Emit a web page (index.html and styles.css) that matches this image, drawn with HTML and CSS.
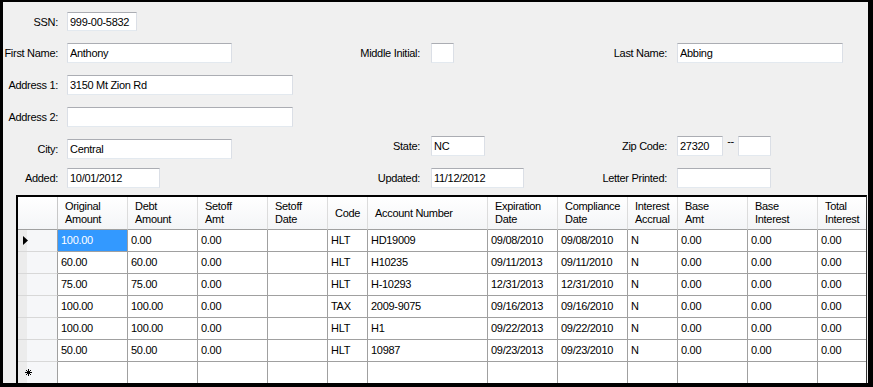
FILE: index.html
```html
<!DOCTYPE html>
<html lang="en">
<head>
    <meta charset="UTF-8">
    <title>Debtor Detail</title>
    <link rel="stylesheet" href="styles.css">
</head>
<body>
    <div class="window">
        <div class="form">
            <label class="lbl c1" for="ssn">SSN:</label>
            <input class="field c2 w-ssn" id="ssn" type="text" value="999-00-5832" readonly>

            <label class="lbl c1" for="first">First Name:</label>
            <input class="field c2 w-name" id="first" type="text" value="Anthony" readonly>
            <label class="lbl c3" for="mi">Middle Initial:</label>
            <input class="field c4 w-mi" id="mi" type="text" value="" readonly>
            <label class="lbl c5" for="last">Last Name:</label>
            <input class="field c6 w-last" id="last" type="text" value="Abbing" readonly>

            <label class="lbl c1" for="addr1">Address 1:</label>
            <input class="field c2 w-addr" id="addr1" type="text" value="3150 Mt Zion Rd" readonly>

            <label class="lbl c1" for="addr2">Address 2:</label>
            <input class="field c2 w-addr" id="addr2" type="text" value="" readonly>

            <label class="lbl c1" for="city">City:</label>
            <input class="field c2 w-name" id="city" type="text" value="Central" readonly>
            <label class="lbl c3 up" for="state">State:</label>
            <input class="field c4 w-state up" id="state" type="text" value="NC" readonly>
            <label class="lbl c5 up" for="zip">Zip Code:</label>
            <div class="zip c6 up">
                <input class="field w-zip" id="zip" type="text" value="27320" readonly>
                <span class="dash">--</span>
                <input class="field w-zip4" type="text" value="" readonly>
            </div>

            <label class="lbl c1" for="added">Added:</label>
            <input class="field c2 w-date" id="added" type="text" value="10/01/2012" readonly>
            <label class="lbl c3" for="updated">Updated:</label>
            <input class="field c4 w-date" id="updated" type="text" value="11/12/2012" readonly>
            <label class="lbl c5" for="printed">Letter Printed:</label>
            <input class="field c6 w-printed" id="printed" type="text" value="" readonly>
        </div>

        <div class="grid-view">
            <div class="gv-row gv-head">
                <div class="hcell corner"></div>
                <div class="hcell">Original<br>Amount</div>
                <div class="hcell">Debt<br>Amount</div>
                <div class="hcell">Setoff<br>Amt</div>
                <div class="hcell">Setoff<br>Date</div>
                <div class="hcell">Code</div>
                <div class="hcell">Account Number</div>
                <div class="hcell">Expiration<br>Date</div>
                <div class="hcell">Compliance<br>Date</div>
                <div class="hcell">Interest<br>Accrual</div>
                <div class="hcell">Base<br>Amt</div>
                <div class="hcell">Base<br>Interest</div>
                <div class="hcell">Total<br>Interest</div>
            </div>

            <div class="gv-row">
                <div class="rowhdr">
                    <svg width="5" height="9" viewBox="0 0 5 9"><polygon points="0,0 5,4.5 0,9" fill="#000"/></svg>
                </div>
                <div class="cell selected">100.00</div>
                <div class="cell">0.00</div>
                <div class="cell">0.00</div>
                <div class="cell"></div>
                <div class="cell">HLT</div>
                <div class="cell">HD19009</div>
                <div class="cell">09/08/2010</div>
                <div class="cell">09/08/2010</div>
                <div class="cell">N</div>
                <div class="cell">0.00</div>
                <div class="cell">0.00</div>
                <div class="cell">0.00</div>
            </div>
            <div class="gv-row">
                <div class="rowhdr"></div>
                <div class="cell">60.00</div>
                <div class="cell">60.00</div>
                <div class="cell">0.00</div>
                <div class="cell"></div>
                <div class="cell">HLT</div>
                <div class="cell">H10235</div>
                <div class="cell">09/11/2013</div>
                <div class="cell">09/11/2010</div>
                <div class="cell">N</div>
                <div class="cell">0.00</div>
                <div class="cell">0.00</div>
                <div class="cell">0.00</div>
            </div>
            <div class="gv-row">
                <div class="rowhdr"></div>
                <div class="cell">75.00</div>
                <div class="cell">75.00</div>
                <div class="cell">0.00</div>
                <div class="cell"></div>
                <div class="cell">HLT</div>
                <div class="cell">H-10293</div>
                <div class="cell">12/31/2013</div>
                <div class="cell">12/31/2010</div>
                <div class="cell">N</div>
                <div class="cell">0.00</div>
                <div class="cell">0.00</div>
                <div class="cell">0.00</div>
            </div>
            <div class="gv-row">
                <div class="rowhdr"></div>
                <div class="cell">100.00</div>
                <div class="cell">100.00</div>
                <div class="cell">0.00</div>
                <div class="cell"></div>
                <div class="cell">TAX</div>
                <div class="cell">2009-9075</div>
                <div class="cell">09/16/2013</div>
                <div class="cell">09/16/2010</div>
                <div class="cell">N</div>
                <div class="cell">0.00</div>
                <div class="cell">0.00</div>
                <div class="cell">0.00</div>
            </div>
            <div class="gv-row">
                <div class="rowhdr"></div>
                <div class="cell">100.00</div>
                <div class="cell">100.00</div>
                <div class="cell">0.00</div>
                <div class="cell"></div>
                <div class="cell">HLT</div>
                <div class="cell">H1</div>
                <div class="cell">09/22/2013</div>
                <div class="cell">09/22/2010</div>
                <div class="cell">N</div>
                <div class="cell">0.00</div>
                <div class="cell">0.00</div>
                <div class="cell">0.00</div>
            </div>
            <div class="gv-row">
                <div class="rowhdr"></div>
                <div class="cell">50.00</div>
                <div class="cell">50.00</div>
                <div class="cell">0.00</div>
                <div class="cell"></div>
                <div class="cell">HLT</div>
                <div class="cell">10987</div>
                <div class="cell">09/23/2013</div>
                <div class="cell">09/23/2010</div>
                <div class="cell">N</div>
                <div class="cell">0.00</div>
                <div class="cell">0.00</div>
                <div class="cell">0.00</div>
            </div>
            <div class="gv-row">
                <div class="rowhdr newrow">
                    <svg width="7" height="7" viewBox="0 0 7 7" stroke="#000" stroke-width="1">
                        <line x1="3.5" y1="0" x2="3.5" y2="7"/>
                        <line x1="0" y1="3.5" x2="7" y2="3.5"/>
                        <line x1="1" y1="1" x2="6" y2="6"/>
                        <line x1="6" y1="1" x2="1" y2="6"/>
                    </svg>
                </div>
                <div class="cell"></div>
                <div class="cell"></div>
                <div class="cell"></div>
                <div class="cell"></div>
                <div class="cell"></div>
                <div class="cell"></div>
                <div class="cell"></div>
                <div class="cell"></div>
                <div class="cell"></div>
                <div class="cell"></div>
                <div class="cell"></div>
                <div class="cell"></div>
            </div>
        </div>
    </div>
</body>
</html>
```

FILE: styles.css
```css
body {
    margin: 0;
    font-family: "Liberation Sans", Arial, sans-serif;
    font-size: 11px;
    letter-spacing: -0.3px;
    color: #000;
}
.window {
    width: 873px;
    height: 387px;
    box-sizing: border-box;
    border: solid #000;
    border-width: 2px 5px 4px 3px;
    background: #f0f0f0;
    display: flex;
    flex-direction: column;
    overflow: hidden;
}

/* header fields */
.form {
    display: grid;
    grid-template-columns: 64px 233px 131px 129px 117px 1fr;
    grid-template-rows: 31px 32px 32px 32px 29px 27px;
    padding-top: 10px;
}
.c1 { grid-column: 1; }
.c2 { grid-column: 2; }
.c3 { grid-column: 3; }
.c4 { grid-column: 4; }
.c5 { grid-column: 5; }
.c6 { grid-column: 6; }
.lbl {
    align-self: start;
    text-align: right;
    line-height: 20px;
    white-space: nowrap;
}
.lbl.c1 { padding-right: 9px; }
.lbl.c3 { padding-right: 11px; }
.lbl.c5 { padding-right: 10px; }
.field {
    align-self: start;
    height: 20px;
    box-sizing: border-box;
    margin: 0;
    padding: 0 2px;
    border: 1px solid #dbdfe6;
    border-top-color: #abadb3;
    border-bottom-color: #e3e9ef;
    background: #fff;
    font-family: inherit;
    font-size: 11px;
    letter-spacing: -0.3px;
    color: #000;
    outline: none;
}
.up { margin-top: -3px; }
.w-ssn { width: 70px; height: 19px; }
.w-name { width: 165px; }
.w-mi { width: 23px; }
.w-last { width: 166px; }
.w-addr { width: 226px; }
.w-state { width: 54px; }
.w-date { width: 93px; }
.w-printed { width: 94px; }
.w-zip { width: 46px; }
.w-zip4 { width: 33px; }
.zip {
    display: flex;
    align-items: flex-start;
    align-self: start;
}
.dash {
    width: 15px;
    text-align: center;
    line-height: 11px;
    letter-spacing: -0.5px;
}

/* data grid */
.grid-view {
    flex: 1;
    margin: 0 1px 0 13px;
    border-top: 2px solid #000;
    border-left: 2px solid #000;
    border-right: 1px solid #333;
    background: #fff;
    overflow: hidden;
}
.gv-row {
    display: grid;
    grid-template-columns: 40px 70px 70px 70px 60px 40px 120px 70px 70px 50px 70px 70px 70px;
    height: 22px;
}
.gv-head {
    height: 33px;
}
.hcell {
    display: flex;
    align-items: center;
    box-sizing: border-box;
    padding-left: 7px;
    line-height: 13px;
    white-space: nowrap;
    background: linear-gradient(#ffffff, #f4f5f7);
    border-right: 1px solid #dcdcdc;
    border-bottom: 1px solid #a0a0a0;
}
.hcell.corner {
    border-right-color: #c8c8c8;
}
.cell {
    box-sizing: border-box;
    padding-left: 3px;
    line-height: 21px;
    white-space: nowrap;
    overflow: hidden;
    border-right: 1px solid #a0a0a0;
    border-bottom: 1px solid #a0a0a0;
}
.cell.selected {
    background: #3399ff;
    color: #fff;
}
.rowhdr {
    display: flex;
    align-items: center;
    box-sizing: border-box;
    padding-left: 5px;
    background: linear-gradient(to right, #ececec 0, #ececec 9px, #f6f7f9 9px);
    border-right: 1px solid #a0a0a0;
    border-bottom: 1px solid #d8d8d8;
}
.rowhdr.newrow {
    padding-left: 7px;
}
```
